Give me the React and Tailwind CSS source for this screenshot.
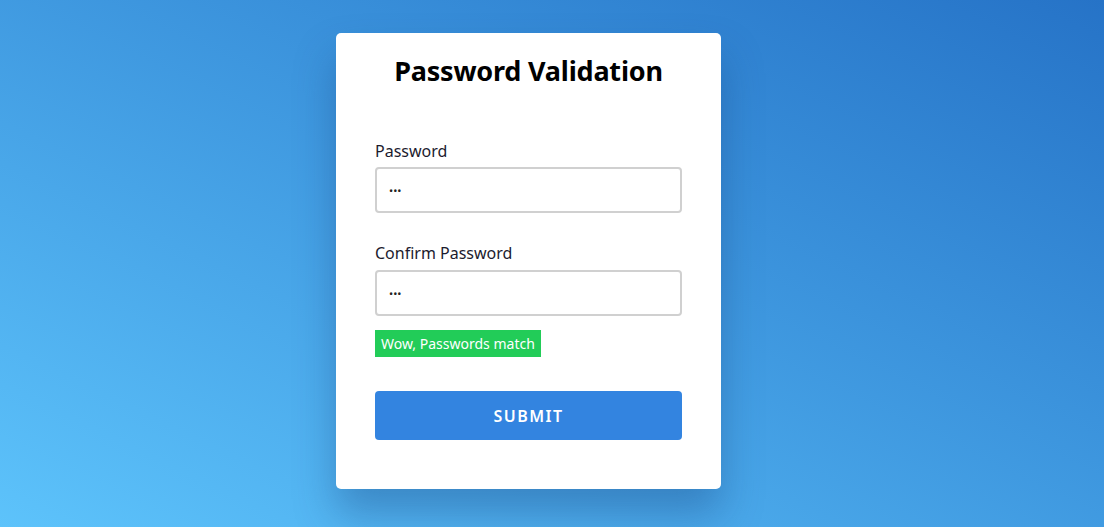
export default function App() {
  const font = { fontFamily: '"Noto Sans", "Open Sans", sans-serif' };

  return (
    <div
      className="min-h-[527px] w-full flex justify-center pr-[47px] pt-[33px] bg-linear-to-tr from-[#5dc3fb] to-[#2673c7]"
      style={font}
    >
      <div className="w-[385px] h-[456px] bg-white rounded-[5px] shadow-[0_25px_40px_rgba(20,60,120,0.35)] px-[39px] pt-[18px] flex flex-col">
        <h1 className="text-center text-[27px] leading-[40px] font-bold text-black tracking-[-0.2px]">
          Password Validation
        </h1>

        <form className="mt-[50px] flex flex-col" onSubmit={(e) => e.preventDefault()}>
          <label className="text-[16px] leading-[20px] text-[#1c1b2e]">Password</label>
          <input
            type="password"
            readOnly
            value="abc"
            className="mt-[6px] h-[46px] w-full rounded-[4px] border-2 border-[#d0d0d0] px-[12px] text-[11px] text-[#222] outline-none"
          />

          <label className="mt-[30px] text-[16px] leading-[20px] text-[#1c1b2e]">
            Confirm Password
          </label>
          <input
            type="password"
            readOnly
            value="abc"
            className="mt-[7px] h-[46px] w-full rounded-[4px] border-2 border-[#d0d0d0] px-[12px] text-[11px] text-[#222] outline-none"
          />

          <div className="mt-[14px] self-start bg-[#22cc58] px-[6px] h-[27px] flex items-center text-[14px] text-white">
            Wow, Passwords match
          </div>

          <button
            type="submit"
            className="mt-[34px] h-[49px] w-full rounded-[4px] bg-[#3384e0] text-white text-[16px] font-semibold tracking-[1.5px]"
          >
            SUBMIT
          </button>
        </form>
      </div>
    </div>
  );
}
